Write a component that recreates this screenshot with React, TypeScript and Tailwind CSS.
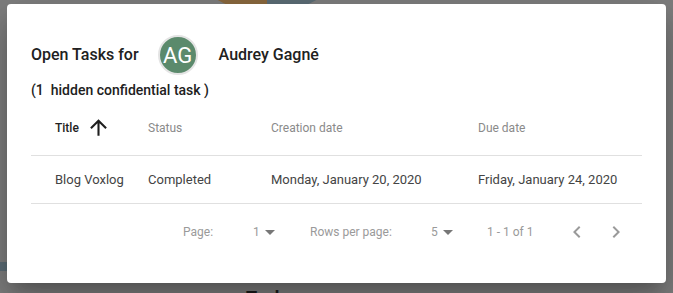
import React from 'react';

const columns = ['Title', 'Status', 'Creation date', 'Due date'];

const rows = [
  {
    id: 1,
    title: 'Blog Voxlog',
    status: 'Completed',
    created: 'Monday, January 20, 2020',
    due: 'Friday, January 24, 2020',
  },
];

function ArrowUp() {
  return (
    <svg viewBox="0 0 24 24" className="h-[25px] w-[25px] fill-[#1f1f1f]">
      <path d="M4 12l1.41 1.41L11 7.83V20h2V7.83l5.58 5.59L20 12l-8-8-8 8z" />
    </svg>
  );
}

function DropTriangle() {
  return (
    <svg viewBox="7 10 10 5" className="ml-[5px] h-[5px] w-[10px] fill-[#777]">
      <path d="M7 10l5 5 5-5z" />
    </svg>
  );
}

function Chevron({ dir }: { dir: 'left' | 'right' }) {
  return (
    <svg viewBox="0 0 24 24" className="h-6 w-6 fill-[#9a9a9a]">
      {dir === 'left' ? (
        <path d="M15.41 7.41L14 6l-6 6 6 6 1.41-1.41L10.83 12z" />
      ) : (
        <path d="M10 6L8.59 7.41 13.17 12l-4.58 4.59L10 18l6-6z" />
      )}
    </svg>
  );
}

export default function App() {
  return (
    <div
      className="relative h-[293px] w-[673px] overflow-hidden bg-[#7f7f7f]"
      style={{ fontFamily: 'Roboto, "Noto Sans", sans-serif' }}
    >
      {/* page behind the backdrop */}
      <div className="absolute left-[167px] top-[-187px] h-[200px] w-[200px] overflow-hidden rounded-full">
        <div className="flex h-full">
          <div className="h-full w-1/2 bg-[#8c6a3f]" />
          <div className="h-full w-1/2 bg-[#5d6e77]" />
        </div>
      </div>
      <div className="absolute left-0 top-[262px] h-[9px] w-[10px] bg-[#5d6e77]" />
      <div className="absolute left-[246px] top-[286px] text-[18px] font-bold leading-6 text-[#1c1c1c]">Tasks</div>

      {/* dialog */}
      <div className="relative ml-[7px] mt-1 flex h-[279px] w-[659px] flex-col rounded bg-white px-6 pt-[26px] shadow-[0_11px_15px_-7px_rgba(0,0,0,0.2),0_24px_38px_3px_rgba(0,0,0,0.14),0_9px_46px_8px_rgba(0,0,0,0.12)]">
        <div className="flex h-[50px] items-center text-base font-medium text-[#212121]">
          <span>Open Tasks for</span>
          <div className="ml-[19px] mr-[21px] flex h-10 w-10 items-center justify-center rounded-full border-2 border-[#e4e4e4] bg-[#5b8a6c] text-[22px] font-normal text-white">
            AG
          </div>
          <span>Audrey Gagné</span>
        </div>
        <div className="h-5 whitespace-pre text-sm font-medium leading-5 text-[#212121]">
          (1  hidden confidential task )
        </div>

        <div className="grid grid-cols-[93px_123px_207px_188px] border-b border-[#e0e0e0]">
          {columns.map((col, i) => (
            <div
              key={col}
              className={
                i === 0
                  ? 'flex h-[55px] items-center pl-6 text-xs font-medium text-[#212121]'
                  : 'flex h-[55px] items-center pl-6 text-xs text-[#8a8a8a]'
              }
            >
              {col}
              {i === 0 && (
                <span className="ml-[7px]">
                  <ArrowUp />
                </span>
              )}
            </div>
          ))}
        </div>

        {rows.map((row) => (
          <div
            key={row.id}
            className="grid h-12 grid-cols-[93px_123px_207px_188px] items-center border-b border-[#e0e0e0] text-[13px] text-[#444]"
          >
            <div className="pl-6">{row.title}</div>
            <div className="pl-6">{row.status}</div>
            <div className="pl-6">{row.created}</div>
            <div className="pl-6">{row.due}</div>
          </div>
        ))}

        {/* pagination */}
        <div className="flex h-14 items-center text-xs text-[#9a9a9a]">
          <span className="ml-[152px] w-[70px]">Page:</span>
          <span className="flex w-[57px] items-center">
            1
            <DropTriangle />
          </span>
          <span className="w-[121px]">Rows per page:</span>
          <span className="flex w-[56px] items-center">
            5
            <DropTriangle />
          </span>
          <span className="w-[78px]">1 - 1 of 1</span>
          <Chevron dir="left" />
          <span className="ml-[15px]">
            <Chevron dir="right" />
          </span>
        </div>
      </div>
    </div>
  );
}
